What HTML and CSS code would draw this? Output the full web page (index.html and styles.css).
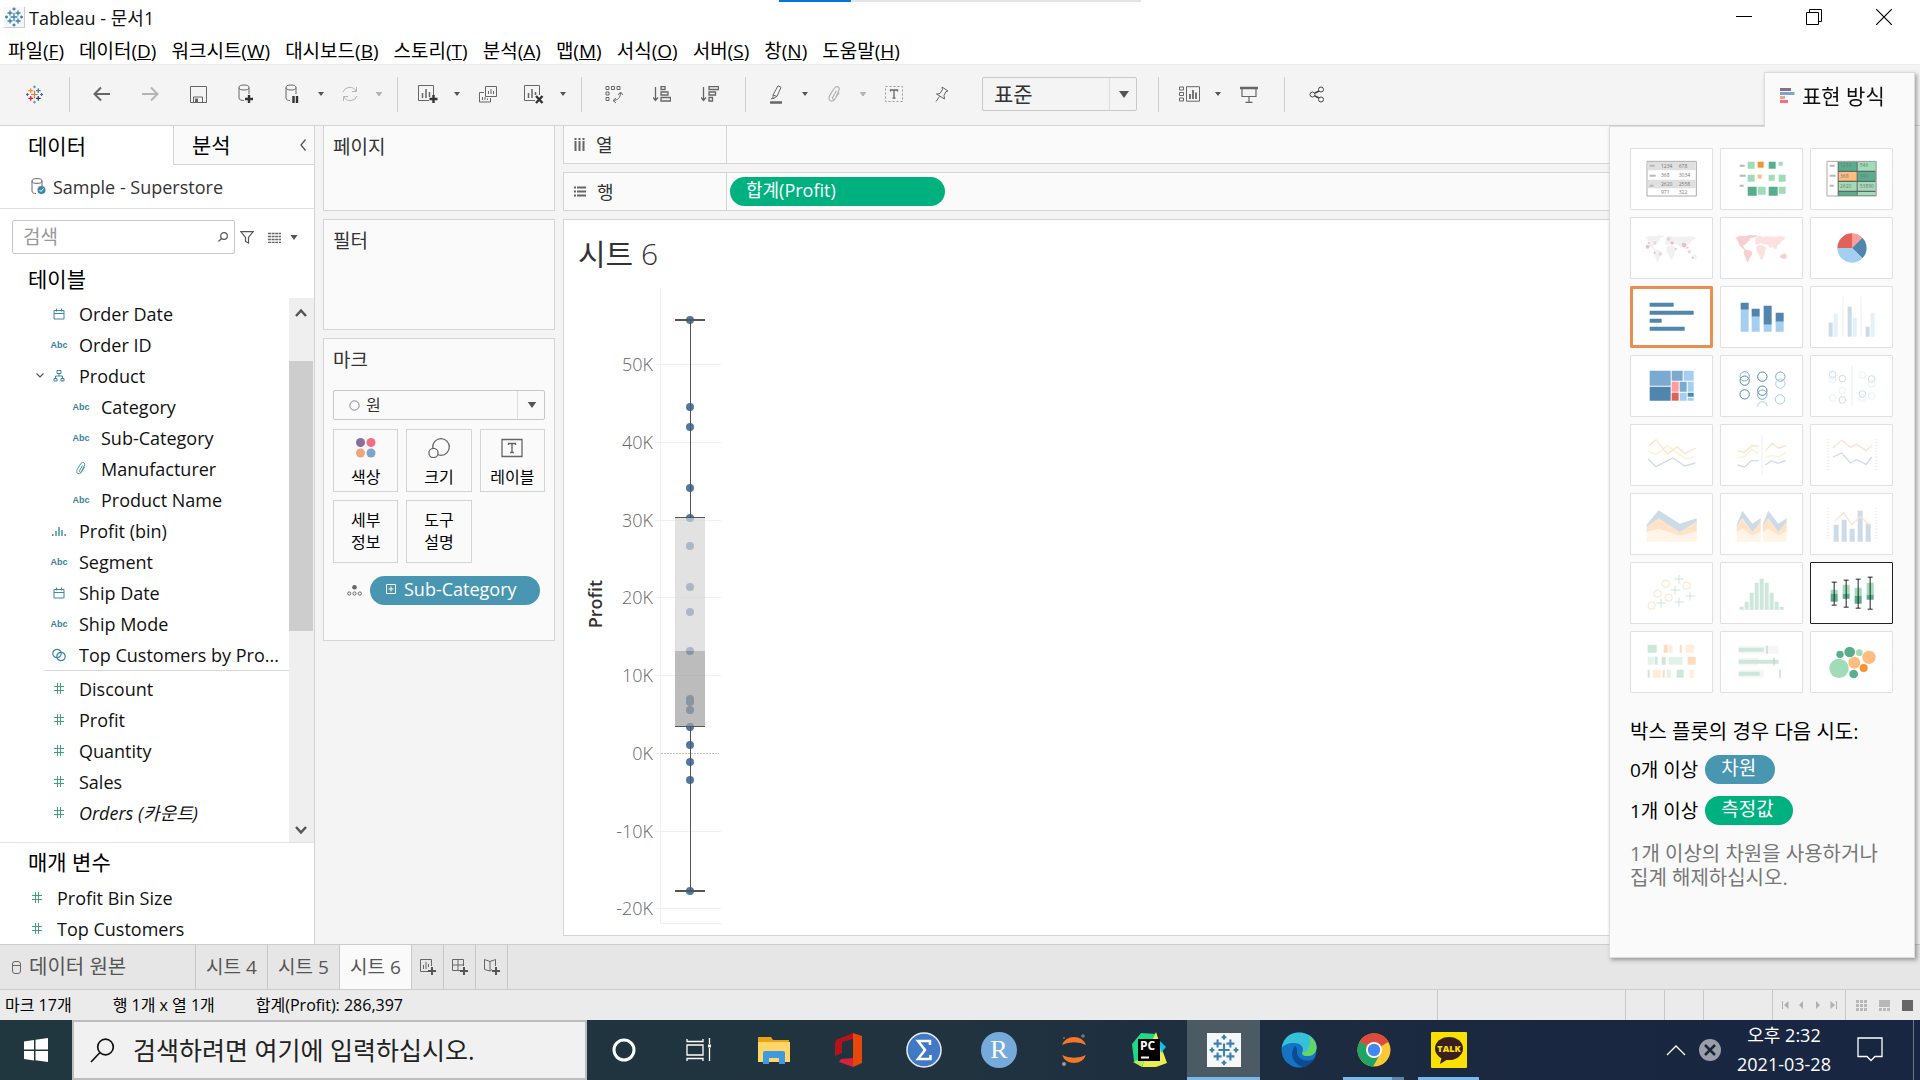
FILE: index.html
```html
<!DOCTYPE html>
<html lang="ko">
<head>
<meta charset="utf-8">
<title>Tableau - 문서1</title>
<link rel="stylesheet" href="styles.css">
</head>
<body>
<svg class="defs" aria-hidden="true">
  <symbol id="i-caret" viewBox="0 0 6 4"><path d="M0 0h6L3 4z" fill="currentColor"/></symbol>
  <symbol id="i-down" viewBox="0 0 10 7"><path d="M0 0h10L5 7z" fill="currentColor"/></symbol>
  <symbol id="i-cal" viewBox="0 0 12 12"><path d="M1 2.500h10v8.500H1zM1 5.500h10M3.500 .5v3M8.500 .5v3" fill="none" stroke="currentColor"/></symbol>
  <symbol id="i-tree" viewBox="0 0 12 12"><path d="M4 .5h4v3H4zM1 8.500h3v2.500H1zM8 8.500h3v2.500H8zM6 3.500v2.500M2.500 8.500V6h7v2.500" fill="none" stroke="currentColor"/></symbol>
  <symbol id="i-clip" viewBox="0 0 14 18"><path d="M3 8l4-6c1.500-2.500 6-1.500 5 2L8 13c-1 2-4 1-3-1l4-7M3 8c-2 3-3 7 0 8 3 1 4-1 5-3l4-6" fill="none" stroke="currentColor" stroke-width="1.300"/></symbol>
  <symbol id="i-bin" viewBox="0 0 14 12"><path d="M.75 9v2M4 6v5M7 2v9M10 5v6M13.200 9v2" fill="none" stroke="currentColor" stroke-width="1.400"/></symbol>
  <symbol id="i-set" viewBox="0 0 14 14"><circle cx="5" cy="5.500" r="4.200" fill="none" stroke="currentColor" stroke-width="1.200"/><circle cx="9" cy="8.500" r="4.200" fill="none" stroke="currentColor" stroke-width="1.200"/></symbol>
  <symbol id="i-hash" viewBox="0 0 10 11"><path d="M3.500 0v11M6.500 0v11M0 3.500h10M0 7.500h10" fill="none" stroke="currentColor"/></symbol>
  <symbol id="i-tableau" viewBox="0 0 18 20"><path d="M9 6v8M5.500 10h7" class="c1"/><path d="M5 3.500v5M2.500 6h5" class="c2"/><path d="M13 3.500v5M10.500 6h5" class="c3"/><path d="M5 11.500v5M2.500 14h5" class="c4"/><path d="M13 11.500v5M10.500 14h5" class="c5"/><path d="M9 .5v3M7.500 2h3M9 16.500v3M7.500 18h3" class="c6"/><path d="M1.500 8.500v3M0 10h3M16.500 8.500v3M15 10h3" class="c7"/></symbol>
</svg>

<header class="titlebar">
  <span class="app-logo"><svg width="18" height="20"><use href="#i-tableau"/></svg></span>
  <h1>Tableau - 문서1</h1>
  <div class="progress"><span></span></div>
  <div class="win-controls">
    <button aria-label="최소화"><svg width="16" height="16"><path d="M0 7.500h16" stroke="#000"/></svg></button>
    <button aria-label="이전 크기로"><svg width="16" height="16"><path d="M.5 3.500h12v12H.5zM3.500 3.500v-3h12v12h-3" fill="none" stroke="#000"/></svg></button>
    <button aria-label="닫기"><svg width="16" height="16"><path d="M0 0l16 16M16 0L0 16" stroke="#000" stroke-width="1.200"/></svg></button>
  </div>
</header>
<nav class="menubar">
  <a href="#">파일(<u>F</u>)</a><a href="#">데이터(<u>D</u>)</a><a href="#">워크시트(<u>W</u>)</a><a href="#">대시보드(<u>B</u>)</a><a href="#">스토리(<u>T</u>)</a><a href="#">분석(<u>A</u>)</a><a href="#">맵(<u>M</u>)</a><a href="#">서식(<u>O</u>)</a><a href="#">서버(<u>S</u>)</a><a href="#">창(<u>N</u>)</a><a href="#">도움말(<u>H</u>)</a>
</nav>

<div class="toolbar">
  <button class="tool logo" aria-label="시작 페이지"><svg width="17" height="19"><use href="#i-tableau"/></svg></button>
  <i class="sep"></i>
  <button class="tool" aria-label="실행 취소"><svg width="18" height="16"><path d="M17 8H2M8 1.500L1.500 8 8 14.500" stroke-width="2"/></svg></button>
  <button class="tool off" aria-label="다시 실행"><svg width="18" height="16"><path d="M1 8h15M10 1.500L16.500 8 10 14.500" stroke-width="2"/></svg></button>
  <button class="tool" aria-label="저장"><svg width="17" height="17"><path d="M.5 .5h16v16H.5zM3.500 16v-5h9v5"/><path d="M5 12.500h3v4H5z" class="fill"/></svg></button>
  <button class="tool" aria-label="새 데이터 원본"><svg width="16" height="20"><ellipse cx="6" cy="3.500" rx="5" ry="2.500"/><path d="M1 3.500V14c0 2 3 2.500 5 2.500M11 3.500V10"/><path d="M11 11v8M7 15h8" class="bold"/></svg></button>
  <button class="tool split" aria-label="자동 업데이트 일시 중지"><svg width="14" height="20"><ellipse cx="6" cy="3.500" rx="5" ry="2.500"/><path d="M1 3.500V14c0 2 2 2.500 4 2.500M11 3.500V10"/><path d="M8.500 12v7M12 12v7" class="bold"/></svg></button><button class="drop" aria-label="옵션"><svg width="6" height="4"><use href="#i-caret"/></svg></button>
  <button class="tool split off" aria-label="업데이트"><svg width="18" height="16"><path d="M2 6a7 6.500 0 0 1 13-1M16 10a7 6.500 0 0 1-13 1M15.500 1v4.500H11M2.500 15v-4.500H7"/></svg></button><button class="drop off" aria-label="옵션"><svg width="6" height="4"><use href="#i-caret"/></svg></button>
  <i class="sep"></i>
  <button class="tool split" aria-label="새 워크시트"><svg width="20" height="19"><path d="M11 15.500H.5V.5h15V10"/><path d="M4.500 8v5M8 4v9M11.500 7v5" stroke-width="1.500"/><path d="M15.500 10v8M11.500 14h8" class="bold"/></svg></button><button class="drop" aria-label="옵션"><svg width="6" height="4"><use href="#i-caret"/></svg></button>
  <button class="tool" aria-label="복제"><svg width="18" height="17"><path d="M6.500 .5h11v10h-11zM5 6.500H.5v9.500h11V12"/><path d="M9.500 5v3M12 3v5M14.500 5v3M3.500 11v3M6 11v3M8.500 12.500v1.500"/></svg></button>
  <button class="tool split" aria-label="시트 지우기"><svg width="20" height="19"><path d="M11 15.500H.5V.5h15V10"/><path d="M4.500 8v5M8 4v9M11.500 7v3" stroke-width="1.500"/><path d="M12 11l6.500 7M18.500 11L12 18" class="bold"/></svg></button><button class="drop" aria-label="옵션"><svg width="6" height="4"><use href="#i-caret"/></svg></button>
  <i class="sep"></i>
  <button class="tool" aria-label="행과 열 바꾸기"><svg width="18" height="18"><path d="M1 1.500h3v3H1zM6.500 1.500h3v3h-3zM12 1.500h3v3h-3zM1 7h3v3H1zM1 12.500h3v3H1zM15.500 8c0 5-3 7-7 7.500M13 10l2.500-3L18 10M11 13l-3 2.500 3 2.500"/></svg></button>
  <button class="tool" aria-label="오름차순 정렬"><svg width="18" height="16"><path d="M2.500 1v13M0 11.500l2.500 3 2.500-3M8 .5h4v3H8zM8 6h7v3H8zM8 11.500h9.500v3.500H8z" stroke-width="1.300"/></svg></button>
  <button class="tool" aria-label="내림차순 정렬"><svg width="18" height="16"><path d="M2.500 1v13M0 11.500l2.500 3 2.500-3M8 .5h9.500v3H8zM8 6h6.500v3H8zM8 11.500h3.500v3.500H8z" stroke-width="1.300"/></svg></button>
  <i class="sep"></i>
  <button class="tool split" aria-label="하이라이트"><svg width="14" height="19"><path d="M4 10L9 .8l3 1.500-4 9-4 2.500zM4 10l4 1.500M2 14l2-1"/><path d="M1 17.500h12" class="gray2"/></svg></button><button class="drop" aria-label="옵션"><svg width="6" height="4"><use href="#i-caret"/></svg></button>
  <button class="tool split off" aria-label="그룹"><svg width="13" height="17"><use href="#i-clip"/></svg></button><button class="drop off" aria-label="옵션"><svg width="6" height="4"><use href="#i-caret"/></svg></button>
  <button class="tool" aria-label="마크 레이블 표시"><svg width="18" height="16"><path d="M.5 .5h17v15H.5z" stroke-dasharray="2 2" stroke="#999"/><path d="M5.500 5.500V4h7v1.500M9 4v8M7.500 12.200h3" stroke-width="1.300"/></svg></button>
  <button class="tool" aria-label="축 고정"><svg width="14" height="16"><path d="M7 1l6 4-2 .5-2 4 .5 3.500-8-5L5 7.500l2.500-4zM4.500 10.500L1 15.500"/></svg></button>
  <span class="fit"><select aria-label="맞춤"><option>표준</option></select><svg width="10" height="7"><use href="#i-down"/></svg></span>
  <i class="sep"></i>
  <button class="tool split" aria-label="카드 표시/숨기기"><svg width="21" height="16"><path d="M.5 1h4v3h-4zM.5 6.500h4v3h-4zM.5 12h4v3h-4zM7.500 .7h13v14.500h-13z"/><path d="M11 8v5M14 4v9M17 6.500V13" stroke-width="1.800"/></svg></button><button class="drop" aria-label="옵션"><svg width="6" height="4"><use href="#i-caret"/></svg></button>
  <button class="tool" aria-label="프레젠테이션 모드"><svg width="18" height="17"><path d="M2 3v7.500h14V3M9 11v5M5.500 16.300h7" stroke-width="1.200"/><path d="M0 2h18" class="gray2"/></svg></button>
  <i class="sep"></i>
  <button class="tool share" aria-label="공유"><svg width="16" height="17"><circle cx="3.500" cy="8.500" r="2.500"/><circle cx="12" cy="3.500" r="2.500"/><circle cx="12" cy="13.500" r="2.500"/><path d="M6 7l4-2M6 10l4 2" stroke-width="1.800"/></svg></button>
</div>

<main class="workspace">
  <aside class="data-pane">
    <div class="pane-tabs">
      <button class="active">데이터</button>
      <button>분석 <svg width="6" height="12"><path d="M5.500 .5L1 6l4.500 5.500" fill="none" stroke="#555" stroke-width="1.300"/></svg></button>
    </div>
    <div class="source"><svg width="15" height="17"><ellipse cx="6" cy="3" rx="5" ry="2.400" fill="none" stroke="#666"/><path d="M1 3v10c0 2 2 2.500 4 2.500M11 3v5" fill="none" stroke="#666"/><circle cx="10.500" cy="12" r="4" fill="#3a87a6"/><path d="M8.500 12l1.500 1.500 2.500-3" fill="none" stroke="#fff"/></svg>Sample - Superstore</div>
    <div class="find">
      <span class="find-box"><input type="text" placeholder="검색" aria-label="검색"><svg width="10" height="10"><circle cx="6" cy="4" r="3.300" fill="none" stroke="#555" stroke-width="1.200"/><path d="M3.500 6.500L.5 9.500" stroke="#555" stroke-width="1.300"/></svg></span>
      <button aria-label="필터"><svg width="14" height="13"><path d="M.8 .6h12.400L8.500 6.500v5.500l-3-1.500v-4z" fill="none" stroke="#555" stroke-width="1.200"/></svg></button>
      <i></i>
      <button aria-label="보기"><svg width="13" height="11"><path d="M0 1.500h13M0 4.500h13M0 7.500h13M0 10.500h13" stroke="#666" stroke-width="1.500" stroke-dasharray="3 .6"/></svg><svg width="8" height="5"><use href="#i-down"/></svg></button>
    </div>
    <h2>테이블</h2>
    <div class="fields">
      <div class="field-list">
        <ul>
          <li><svg width="11" height="12"><use href="#i-cal"/></svg>Order Date</li>
          <li><b>Abc</b>Order ID</li>
          <li class="parent"><svg class="chev" width="8" height="5"><path d="M.5 .5L4 4 7.500 .5" fill="none" stroke="#555" stroke-width="1.200"/></svg><svg width="12" height="12"><use href="#i-tree"/></svg>Product</li>
          <li class="child"><b>Abc</b>Category</li>
          <li class="child"><b>Abc</b>Sub-Category</li>
          <li class="child"><svg width="10" height="13"><use href="#i-clip"/></svg>Manufacturer</li>
          <li class="child"><b>Abc</b>Product Name</li>
          <li><svg width="14" height="12"><use href="#i-bin"/></svg>Profit (bin)</li>
          <li><b>Abc</b>Segment</li>
          <li><svg width="11" height="12"><use href="#i-cal"/></svg>Ship Date</li>
          <li><b>Abc</b>Ship Mode</li>
          <li><svg width="14" height="14"><use href="#i-set"/></svg>Top Customers by Pro...</li>
        </ul>
        <ul class="measures">
          <li><svg width="10" height="11"><use href="#i-hash"/></svg>Discount</li>
          <li><svg width="10" height="11"><use href="#i-hash"/></svg>Profit</li>
          <li><svg width="10" height="11"><use href="#i-hash"/></svg>Quantity</li>
          <li><svg width="10" height="11"><use href="#i-hash"/></svg>Sales</li>
          <li><svg width="10" height="11"><use href="#i-hash"/></svg><em>Orders (카운트)</em></li>
        </ul>
      </div>
      <div class="scroll"><svg width="12" height="9"><path d="M1 8l5-5.500L11 8" fill="none" stroke="#555" stroke-width="2.500"/></svg><span></span><svg width="12" height="9"><path d="M1 1l5 5.500L11 1" fill="none" stroke="#555" stroke-width="2.500"/></svg></div>
    </div>
    <section class="params">
      <h2>매개 변수</h2>
      <ul class="measures">
        <li><svg width="10" height="11"><use href="#i-hash"/></svg>Profit Bin Size</li>
        <li><svg width="10" height="11"><use href="#i-hash"/></svg>Top Customers</li>
      </ul>
    </section>
  </aside>

  <div class="cards">
    <section class="card pages"><h3>페이지</h3></section>
    <section class="card filters"><h3>필터</h3></section>
    <section class="card marks">
      <h3>마크</h3>
      <span class="mark-type"><svg class="ring" width="11" height="11"><circle cx="5.500" cy="5.500" r="4.700" fill="none" stroke="#888"/></svg><select aria-label="마크 유형"><option>원</option></select><svg width="10" height="6"><use href="#i-down"/></svg></span>
      <div class="mark-grid">
        <button><svg width="20" height="20"><circle cx="4.500" cy="4.500" r="4.500" fill="#8a6f9a"/><circle cx="15" cy="4.500" r="4.500" fill="#f86e80"/><circle cx="4.500" cy="15" r="4.500" fill="#f2a57c"/><circle cx="15" cy="15" r="4.500" fill="#7ea3cc"/></svg>색상</button>
        <button><svg width="22" height="20"><circle cx="13" cy="9" r="8.300" fill="none" stroke="#666" stroke-width="1.300"/><circle cx="5.500" cy="15" r="4.600" fill="#fafafa" stroke="#666" stroke-width="1.300"/></svg>크기</button>
        <button><svg width="22" height="20"><path d="M1 1.500h20v17H1z" fill="none" stroke="#666" stroke-width="1.300"/><path d="M7.500 7V5.500h7V7M11 5.500v9M9 14.500h4" fill="none" stroke="#666" stroke-width="1.400"/></svg>레이블</button>
        <button class="plain">세부<br>정보</button>
        <button class="plain">도구<br>설명</button>
      </div>
      <div class="mark-row"><svg width="15" height="11"><circle cx="7.500" cy="2.300" r="2.300" fill="#666"/><circle cx="2.200" cy="8.500" r="1.600" fill="none" stroke="#666"/><circle cx="7.500" cy="8.500" r="1.600" fill="none" stroke="#666"/><circle cx="12.800" cy="8.500" r="1.600" fill="none" stroke="#666"/></svg><span class="pill dim"><svg width="10" height="10"><path d="M.5 .5h9v9h-9zM5 2.500v5M2.500 5h5" fill="none" stroke="#fff"/></svg>Sub-Category</span></div>
    </section>
  </div>

  <div class="view">
    <div class="shelf"><span class="shelf-name"><svg width="11" height="13"><path d="M1.500 3v10M5.500 3v10M9.500 3v10M1.500 0v2M5.500 0v2M9.500 0v2" stroke="#666" stroke-width="2"/></svg>열</span></div>
    <div class="shelf"><span class="shelf-name"><svg width="12" height="11"><path d="M3 1.500h9M3 5.500h9M3 9.500h9M0 1.500h2M0 5.500h2M0 9.500h2" stroke="#666" stroke-width="2"/></svg>행</span><span class="pill measure">합계(Profit)</span></div>
    <section class="sheet">
      <h2>시트 <span>6</span></h2>
      <svg class="chart" width="160" height="650" viewBox="564 278 160 650">
        <path class="gridlines" d="M655 364.500h66M655 442.500h66M655 520.500h66M655 597.500h66M655 675.500h66M655 831.500h66M655 908.500h66M660.500 288v635.500h61M655 753.500h5"/>
        <path d="M661 753.500h58" stroke="#c4c4c4" stroke-dasharray="2 1"/>
        <g fill="#4e79a7"><circle cx="690" cy="320" r="4"/><circle cx="690" cy="407" r="4"/><circle cx="690" cy="427" r="4"/><circle cx="690" cy="488" r="4"/><circle cx="690" cy="518" r="4"/><circle cx="690" cy="546" r="4"/><circle cx="690" cy="587" r="4"/><circle cx="690" cy="612" r="4"/><circle cx="690" cy="651" r="4"/><circle cx="690" cy="699" r="4"/><circle cx="690" cy="702" r="4"/><circle cx="690" cy="710" r="4"/><circle cx="690" cy="727" r="4"/><circle cx="690" cy="745" r="4"/><circle cx="690" cy="762" r="4"/><circle cx="690" cy="780" r="4"/><circle cx="690" cy="891" r="4"/></g>
        <path d="M675 517h30v134h-30z" fill="#d4d4d4" fill-opacity=".68"/>
        <path d="M675 651h30v75h-30z" fill="#a0a0a0" fill-opacity=".7"/>
        <path d="M690.500 320v197M690.500 726v165M675 517.500h30M675 726.500h30" stroke="#555"/>
        <path d="M675 320h30M675 891h30" stroke="#555" stroke-width="2"/>
        <g class="ticks" text-anchor="end"><text x="653" y="371">50K</text><text x="653" y="449">40K</text><text x="653" y="527">30K</text><text x="653" y="604">20K</text><text x="653" y="682">10K</text><text x="653" y="760">0K</text><text x="653" y="838">-10K</text><text x="653" y="915">-20K</text></g>
        <text class="axis-title" text-anchor="middle" transform="translate(602 604) rotate(-90)">Profit</text>
      </svg>
    </section>
  </div>
</main>

<aside class="show-me">
  <button class="show-tab"><svg width="15" height="16"><path d="M0 0h11v3H0z" fill="#866f95"/><path d="M0 4h14.500v3H0z" fill="#7ea3cc"/><path d="M0 8h5v3H0z" fill="#f2a57c"/><path d="M0 12h8v3H0z" fill="#f86e80"/></svg>표현 방식</button>
  <div class="show-body">
    <div class="charts">
      <button aria-label="텍스트 테이블"><svg viewBox="94 58 243 180"><path d="M142 95h148v104H142z" fill="#fff" stroke="#aaa" stroke-width="3"/><path d="M144 97h144v25H144zM144 150h144v26H144z" fill="#e0e0e0"/><path d="M150 105h15v6h-15zM150 135h18v6h-18zM150 165h12v6h-12z" fill="#b8b8b8"/><g class="mini"><text x="184" y="115">1234</text><text x="237" y="115">678</text><text x="184" y="142">368</text><text x="237" y="142">3034</text><text x="184" y="169">2620</text><text x="237" y="169">2558</text><text x="184" y="194">971</text><text x="237" y="194">322</text></g></svg></button>
      <button aria-label="히트맵"><svg viewBox="364 58 243 180"><path d="M420 105h15v6h-15zM420 135h18v6h-18zM420 165h12v6h-12z" fill="#b8b8b8"/><path d="M444 96h21v21h-21zM537 96h12v12h-12zM444 135h21v21h-21zM507 135h18v18h-18zM537 135h21v21h-21zM474 171h24v24h-24zM537 171h21v21h-21z" fill="#a1dcb8"/><path d="M507 96h21v21h-21zM444 171h27v27h-27zM507 171h27v27h-27z" fill="#58ae8c"/><path d="M474 96h18v18h-18z" fill="#f59331"/><path d="M474 135h12v12h-12z" fill="#ffbe7f"/></svg></button>
      <button aria-label="하이라이트 테이블"><svg viewBox="634 58 243 180"><path d="M682 95h148v104H682z" fill="#fff" stroke="#aaa" stroke-width="3"/><path d="M714 96h114v102H714z" fill="#666"/><path d="M717 97h54v26h-54zM774 127h54v26h-54zM717 187h54v10h-54z" fill="#58ae8c"/><path d="M774 97h54v26h-54zM717 157h54v26h-54zM774 157h54v26h-54zM774 187h54v10h-54z" fill="#a1dcb8"/><path d="M717 127h54v26h-54z" fill="#ffbe7f"/><path d="M690 105h15v6h-15zM690 135h18v6h-18zM690 165h12v6h-12z" fill="#b8b8b8"/><g class="mini"><text x="721" y="113">1234</text><text x="780" y="113">546</text><text x="721" y="144">368</text><text x="780" y="144">340</text><text x="721" y="175">2620</text><text x="780" y="175">53890</text></g></svg></button>

      <button aria-label="기호 맵"><svg viewBox="94 265 243 180"><path id="world" fill="#f1f1f1" d="M138 324l12-6 20 1 8-3 16 2-4 5-10 3 2 6-8 4-6 8-8 4 4 8 8 6-4 2-10-8-8-8-4-10-1-6zM164 362l10-2 12 6 2 8-8 10-4 12-4 2-4-14-6-12zM197 326l8-6 8-2 6 4 14-2 20 1 20-2 14 4-2 6-10 6-4 8-8 4-2 10-6 2-6-8-6 4-8-8-10-4-6 2-6-6-8 6-8 0zM200 350l12-4 14 4 4 6-4 8-2 12-6 12-6 2-4-14-8-12zM276 378l10-6 6 6-2 8-6 2-8-4z"/><g fill="#e8bfc6"><circle cx="144" cy="351" r="6"/><circle cx="147" cy="340" r="3"/><circle cx="166" cy="340" r="5" opacity=".6"/><circle cx="165" cy="369" r="3"/><circle cx="182" cy="373" r="5" opacity=".6"/><circle cx="207" cy="328" r="5" opacity=".7"/><circle cx="217" cy="340" r="5"/><circle cx="228" cy="358" r="3"/><circle cx="253" cy="346" r="7"/><circle cx="264" cy="354" r="3"/><circle cx="269" cy="366" r="5" opacity=".7"/><circle cx="279" cy="384" r="3"/></g></svg></button>
      <button aria-label="맵"><svg viewBox="364 265 243 180"><path fill="#fde0e0" d="M467 326l8-6 8-2 6 4 14-2 20 1 20-2 14 4-2 6-10 6-4 8-8 4-2 10-6 2-6-8-6 4-8-8-10-4-6 2-6-6-8 6-8 0zM470 350l12-4 14 4 4 6-4 8-2 12-6 12-6 2-4-14-8-12z"/><path d="M408 324l12-6 20 1 8-3 26 1-6 6-18 3 2 6-8 4-6 8-8 4 4 8 8 6-4 2-10-8-8-8-4-10zM434 362l10-2 12 6 2 8-8 10-4 12-4 2-4-14-6-12zM541 378l14-8 7 8-2 8-6 2-12-4z" fill="#f7d0d0"/></svg></button>
      <button aria-label="파이 차트"><svg viewBox="634 265 243 180"><path d="M757 355V311a44 44 0 0 0-44 44z" fill="#e26259"/><path d="M757 355V311a44 44 0 0 1 31 13z" fill="#ff9d9a"/><path d="M757 355l31-31a44 44 0 0 1 0 62z" fill="#5085ae"/><path d="M757 355l31 31a44 44 0 0 1-75-31z" fill="#a5cff0"/></svg></button>

      <button class="picked" aria-label="가로 막대"><svg viewBox="94 472 243 180"><path d="M150 519h72v12h-72zM150 543h132v12H150zM150 567h36v12h-36zM150 591h105v12H150z" fill="#5085ae"/></svg></button>
      <button aria-label="누적 막대"><svg viewBox="364 472 243 180"><path d="M423 519h24v21h-24zM456 537h24v24h-24zM492 528h24v57h-24zM528 549h24v27h-24z" fill="#5085ae"/><path d="M423 540h24v66h-24zM456 561h24v45h-24zM492 585h24v21h-24zM528 576h24v30h-24z" fill="#a5cff0"/></svg></button>
      <button aria-label="병렬 막대"><svg viewBox="634 472 243 180"><path d="M687 579h12v42h-12zM744 531h12v90h-12zM798 591h12v30h-12z" fill="#cddbe8"/><path d="M702 552h12v69h-12zM759 564h12v57h-12zM813 549h12v72h-12z" fill="#e4f1fb"/><path d="M730 501v120M784 501v120" stroke="#eee" stroke-width="3"/></svg></button>

      <button aria-label="트리맵"><svg viewBox="94 679 243 180"><path d="M150 723h63v45h-63zM216 723h33v30h-33zM240 756h21v30h-21z" fill="#7aaacf"/><path d="M150 771h63v42h-63zM264 789h18v12h-18z" fill="#5085ae"/><path d="M252 723h30v30h-30zM264 756h18v30h-18zM240 789h21v24h-21zM264 804h18v9h-18z" fill="#a5cff0"/><path d="M216 756h21v30h-21z" fill="#ff9d9a"/><path d="M216 789h21v24h-21z" fill="#e26259"/></svg></button>
      <button aria-label="원 뷰"><svg viewBox="364 679 243 180" fill="none" stroke-width="3"><g stroke="#5085ae"><circle cx="435" cy="753" r="14"/><circle cx="435" cy="794" r="14"/><circle cx="488" cy="741" r="14"/><circle cx="488" cy="783" r="14"/></g><g stroke="#7aaacf"><circle cx="435" cy="740" r="14"/><circle cx="542" cy="741" r="14"/><circle cx="488" cy="795" r="14"/></g><g stroke="#a5cff0"><circle cx="542" cy="762" r="14"/><circle cx="541" cy="809" r="14"/><path d="M474 830a14 14 0 0 1 28 0"/></g></svg></button>
      <button aria-label="병렬 원"><svg viewBox="634 679 243 180" fill="none" stroke-width="3"><path d="M757 708v120" stroke="#eee"/><g stroke="#cddbe8"><circle cx="699" cy="735" r="10"/><circle cx="728" cy="747" r="10"/><circle cx="728" cy="811" r="10"/><circle cx="816" cy="748" r="10"/><circle cx="788" cy="793" r="10"/></g><g stroke="#e4f1fb"><circle cx="699" cy="750" r="10"/><circle cx="728" cy="783" r="10"/><circle cx="699" cy="805" r="10"/><circle cx="788" cy="736" r="10"/><circle cx="816" cy="762" r="10"/><circle cx="788" cy="805" r="10"/><circle cx="816" cy="799" r="10"/></g></svg></button>

      <button aria-label="라인(연속형)"><svg viewBox="94 46 243 180" fill="none" stroke-width="4"><path d="M146 125l24 9 34-26 53 39 30-6" stroke="#fff0d2"/><path d="M148 108l21-18 34 44 30-23 22 21 33-17" stroke="#fee3c8"/><path d="M145 148l24 23 50-26 37 24 31-9" stroke="#cddbe8"/></svg></button>
      <button aria-label="라인(불연속형)"><svg viewBox="364 46 243 180" fill="none" stroke-width="4"><path d="M487 75v120" stroke="#eee" stroke-width="3"/><path d="M414 144l21-3 21-22 20 13M496 144l20-7 20 5 22-13" stroke="#fff0d2"/><path d="M414 124l22 4 20-20 21 1M498 123l19-22 19 14 22-6" stroke="#fee3c8"/><path d="M414 166l21 6 20-19h22M497 166l19-13 18 8 24-8" stroke="#cddbe8"/></svg></button>
      <button aria-label="이중 라인"><svg viewBox="634 46 243 180" fill="none" stroke-width="4"><path d="M685.500 87v95M829.500 87v95" stroke="#eee" stroke-width="9" stroke-dasharray="3 6"/><path d="M700 114l26-22 27 21 17-9 29 18 18-14" stroke="#fee3c8"/><path d="M700 142l26-12 27 30 17-10 29 14 17-22" stroke="#cddbe8"/></svg></button>

      <button aria-label="영역(연속형)"><svg viewBox="94 253 243 180"><path d="M141 345l36-43 63 40 51-16v14l-51 28-63-41-36 24z" fill="#cddbe8"/><path d="M141 350l36-24 63 41 51-32v31l-51 12-63-20-36 10z" fill="#fee3c8"/><path d="M141 368l36-10 63 20 51-13v31H141z" fill="#fff4e6"/></svg></button>
      <button aria-label="영역(불연속형)"><svg viewBox="364 253 243 180"><g id="twoarea"><path d="M411 345l17-42 30 39 25-16v14l-25 28-30-42-17 24z" fill="#cddbe8"/><path d="M411 350l17-24 30 41 25-32v31l-25 12-30-20-17 10z" fill="#fee3c8"/><path d="M411 368l17-10 30 20 25-13v31h-72z" fill="#fff4e6"/></g><use href="#twoarea" x="78"/></svg></button>
      <button aria-label="이중 조합"><svg viewBox="634 253 243 180"><path d="M685.500 294v95M829.500 294v95" stroke="#eee" stroke-width="9" stroke-dasharray="3 6"/><path d="M702 345h15v51h-15zM726 330h15v66h-15zM750 357h15v39h-15zM774 303h15v93h-15zM798 342h15v54h-15z" fill="#cddbe8"/><path d="M706 333l26-24 25 36 25-25 28 26" fill="none" stroke="#fee3c8" stroke-width="4"/></svg></button>

      <button aria-label="산점도"><svg viewBox="94 460 243 180" fill="none" stroke-width="3"><g stroke="#fee3c8"><circle cx="198" cy="522" r="11"/><circle cx="261" cy="528" r="11"/><circle cx="174" cy="552" r="11"/><circle cx="207" cy="564" r="11"/><circle cx="156" cy="588" r="11"/></g><path d="M238 495v27M225 508h27M226 528v27M213 541h27M271 546v27M258 559h27M184 567v27M171 580h27M238 564v27M225 577h27" stroke="#cde7db"/></svg></button>
      <button aria-label="히스토그램"><svg viewBox="364 460 243 180"><path d="M420 591h12v9h-12zM435 576h12v24h-12zM450 549h12v51h-12zM465 519h12v81h-12zM480 507h12v93h-12zM495 519h12v81h-12zM510 549h12v51h-12zM525 576h12v24h-12zM540 591h12v9h-12z" fill="#cde7db"/></svg></button>
      <button class="current" aria-label="박스 플롯"><svg viewBox="634 460 243 180"><path d="M693 540h21v12h-21zM729 525h21v27h-21zM765 534h21v24h-21zM801 519h21v36h-21z" fill="#a1dcb8"/><path d="M693 552h21v24h-21zM729 552h21v15h-21zM765 558h21v24h-21zM801 555h21v15h-21z" fill="#58ae8c"/><path d="M703.500 517v69M696 517.500h15M696 586.500h15M739.500 511v81M732 511.500h15M732 592.500h15M775.500 508v87M768 508.500h15M768 595.500h15M811.500 502v96M804 502.500h15M804 598.500h15" stroke="#222" stroke-width="3"/></svg></button>

      <button aria-label="간트"><svg viewBox="94 667 243 180"><path d="M144 705h27v24h-27zM165 741h9v24h-9zM186 741h12v24h-12zM144 780h6v24h-6zM231 780h21v24h-21z" fill="#cde7db"/><path d="M144 741h18v24h-18zM207 741h42v24h-42zM201 780h12v24h-12z" fill="#e2f3e9"/><path d="M192 705h12v24h-12zM240 705h6v24h-6zM264 741h24v24h-24zM189 780h6v24h-6z" fill="#fbdcc0"/><path d="M207 705h12v24h-12zM258 705h24v24h-24zM159 780h24v24h-24zM270 780h12v24h-12z" fill="#ffecd9"/></svg></button>
      <button aria-label="불릿 그래프"><svg viewBox="364 667 243 180"><path d="M417 708h120v24H417zM417 744h60v24h-60zM417 780h75v24h-75z" fill="#f6f6f6"/><path d="M417 714h75v12h-75zM417 750h120v12H417zM417 786h63v12h-63z" fill="#cde7db"/><path d="M502 708v24M523 744v24M541 780v24" stroke="#c2c2c2" stroke-width="3"/></svg></button>
      <button aria-label="거품형 차트"><svg viewBox="634 667 243 180"><g fill="#58ae8c"><circle cx="721" cy="734" r="11"/><circle cx="750" cy="727" r="16"/><circle cx="762" cy="793" r="13"/></g><g fill="#a1dcb8"><circle cx="718" cy="776" r="29"/><circle cx="779" cy="729" r="10"/></g><g fill="#ffbe7f"><circle cx="764" cy="759" r="18"/><circle cx="808" cy="743" r="20"/></g><circle cx="792" cy="775" r="12" fill="#f59331"/></svg></button>
    </div>
    <p class="lead">박스 플롯의 경우 다음 시도:</p>
    <p class="need">0개 이상 <span class="pill dim">차원</span></p>
    <p class="need">1개 이상 <span class="pill measure">측정값</span></p>
    <p class="hint">1개 이상의 차원을 사용하거나 집계 해제하십시오.</p>
  </div>
</aside>

<nav class="sheet-tabs">
  <button class="ds"><svg width="9" height="13"><rect x=".5" y=".5" width="8" height="12" rx="2.500" fill="none" stroke="#666"/><path d="M.5 4.500h8" stroke="#666"/></svg>데이터 원본</button>
  <button>시트 4</button>
  <button>시트 5</button>
  <button class="active">시트 6</button>
  <button class="new" aria-label="새 워크시트"><svg width="16" height="16"><path d="M8 12.500H.5V.5h11V7M3.500 6v4M6 3v7M8.500 5v3" fill="none" stroke="#666"/><path d="M12 8v8M8 12h8" stroke="#555" stroke-width="2"/></svg></button>
  <button class="new" aria-label="새 대시보드"><svg width="16" height="16"><path d="M8 11.500H.5V.5h11V7M6 .5v11M.5 6h11" fill="none" stroke="#666"/><path d="M12 8v8M8 12h8" stroke="#555" stroke-width="2"/></svg></button>
  <button class="new" aria-label="새 스토리"><svg width="16" height="16"><path d="M8 10.500L6 12 .5 10.500V.5L6 2.500l5.500-2V7M6 2.500V12" fill="none" stroke="#666"/><path d="M12 8v8M8 12h8" stroke="#555" stroke-width="2"/></svg></button>
</nav>
<footer class="status">
  <span>마크 17개</span><span>행 1개 x 열 1개</span><span>합계(Profit): 286,397</span>
  <div class="cells"><i class="w1"></i><i class="w2"></i><i class="w2"></i><i class="w3"></i>
    <i class="nav"><svg width="7" height="8"><path d="M.5 0v8" stroke="#b0b0b0"/><path d="M6.500 0v8L2 4z" fill="#b0b0b0"/></svg><svg width="7" height="8"><path d="M5 0v8L1 4z" fill="#b0b0b0"/></svg><svg width="7" height="8"><path d="M2 0v8l4-4z" fill="#b0b0b0"/></svg><svg width="7" height="8"><path d="M6.500 0v8" stroke="#b0b0b0"/><path d="M.5 0v8L5 4z" fill="#b0b0b0"/></svg></i>
    <i class="modes"><svg width="11" height="11"><path d="M0 1.500h11M0 5.500h11M0 9.500h11" stroke="#b8b8b8" stroke-width="3" stroke-dasharray="3 1"/></svg><svg width="11" height="11"><path d="M0 0h11v7H0z" fill="#b8b8b8"/><path d="M0 9.500h11" stroke="#b8b8b8" stroke-width="3" stroke-dasharray="3 1"/></svg><svg width="11" height="11"><path d="M0 0h11v11H0z" fill="#666"/></svg></i>
  </div>
</footer>

<div class="taskbar">
  <button class="start" aria-label="시작"><svg width="24" height="24"><path d="M0 3.500L10 2v9.500H0zM11.500 1.800L24 0v11.500H11.500zM0 13h10v9.500L0 21zM11.500 13H24v11l-12.500-1.800z" fill="#fff"/></svg></button>
  <label class="search"><svg width="25" height="25"><circle cx="15.500" cy="9" r="7.800" fill="none" stroke="#111" stroke-width="1.700"/><path d="M10 14.500L1 24" stroke="#111" stroke-width="1.700"/></svg><input type="text" aria-label="Windows 검색" placeholder="검색하려면 여기에 입력하십시오."></label>
  <div class="apps">
    <button aria-label="Cortana"><svg width="26" height="26"><circle cx="13" cy="13" r="10" fill="none" stroke="#fff" stroke-width="3"/></svg></button>
    <button aria-label="작업 보기"><svg width="26" height="26" fill="none" stroke="#fff" stroke-width="1.300"><path d="M1 2v2.500h16V2M1 8h16v10H1zM1 24v-2.500h16V24M23.500 1v6M23.500 11v13"/><path d="M23.500 7.500v3" stroke-width="3"/></svg></button>
    <button aria-label="파일 탐색기"><svg width="32" height="28"><path d="M0 1h13l2 3h16v21H0z" fill="#e8a317"/><path d="M0 6h32v20H0z" fill="#ffd667"/><path d="M5 28V17q0-2 2-2h18q2 0 2 2v11h-6v-6H11v6z" fill="#3d9ae0"/></svg></button>
    <button aria-label="Office"><svg width="28" height="34"><path d="M18 0l9 3v27l-9 4z" fill="#e8470c"/><path d="M18 0L2 6.500C0 8 0 9 0 11v12l7-3V9l11-3z" fill="#b5121b"/><path d="M6 26l12-1v9L4 29z" fill="#d8213b"/></svg></button>
    <button aria-label="통계"><svg width="36" height="36"><circle cx="18" cy="18" r="17" fill="#4279c4" stroke="#e6eef8" stroke-width="1.500"/><path d="M24 13v-4H12l7 9-7 9h12.500v-4" fill="none" stroke="#fff" stroke-width="2.500"/></svg></button>
    <button aria-label="RStudio"><svg width="36" height="36"><circle cx="18" cy="18" r="18" fill="#75aadb"/><text x="18" y="26" text-anchor="middle" class="glyph-r">R</text></svg></button>
    <button aria-label="Jupyter"><svg width="26" height="34"><path d="M1 12a13 13 0 0 1 24 0 17 9 0 0 0-24 0zM1 22a13 13 0 0 0 24 0 17 9 0 0 1-24 0z" fill="#f37726"/><circle cx="22" cy="3" r="1.800" fill="#777"/><circle cx="3" cy="31" r="2" fill="#999"/><circle cx="3" cy="5" r="1" fill="#777"/></svg></button>
    <button aria-label="PyCharm"><svg width="36" height="36"><path d="M1 12L10 1l16 1-5 12-4 21-14-6z" fill="#21d789"/><path d="M25 0l3 9 8 22-11 4-14 0 4-12z" fill="#e8ee4d"/><path d="M28 8l7 7-5 6z" fill="#07c3f2"/><path d="M2 30l9 5 3-10z" fill="#b8ea52"/><path d="M7 7h22v22H7z" fill="#000"/><text x="9" y="18" class="glyph-pc">PC</text><path d="M10 25.500h8" stroke="#fff" stroke-width="2"/></svg></button>
    <button class="running current" aria-label="Tableau"><span><svg width="30" height="32"><use href="#i-tableau"/></svg></span></button>
    <button aria-label="Edge"><svg width="36" height="36"><circle cx="18" cy="18" r="17.500" fill="#1673c4"/><path d="M.8 16C2 6 9 .5 18 .5 28 .5 35.500 7 35.500 15c0 6-4 9-9 9-4 0-6-1.500-5-4 2-5-2-9-8-9-6 0-11 2-12.700 5z" fill="#35c1d8"/><path d="M28 4c5 3 7.500 7 7.500 11 0 6-4 9-9 9-4 0-6-1.500-5-4 4 1 10-6 6.500-16z" fill="#63d663"/><path d="M14 14c-6 8-2 18 8 21 5-1 9-4 11-8-8 4-18 0-17-8 0-2 0-4-2-5z" fill="#0c4a94"/></svg></button>
    <button class="running multi" aria-label="Chrome"><svg width="34" height="34"><circle cx="17" cy="17" r="16.500" fill="#fcc934"/><path d="M17 17L2.500 9A16.500 16.500 0 0 1 31.500 9z" fill="#dd4b3e"/><path d="M17 17L2.700 8.800A16.500 16.500 0 0 0 16 33.500l7-12z" fill="#1fa463"/><circle cx="17" cy="17" r="8" fill="#fff"/><circle cx="17" cy="17" r="6.200" fill="#4587f0"/></svg></button>
    <button class="running" aria-label="카카오톡"><svg width="36" height="36"><rect width="36" height="36" rx="1" fill="#fae100"/><ellipse cx="18" cy="16.500" rx="14" ry="11.500" fill="#3b1e1e"/><path d="M11 24l-2 8 8-5z" fill="#3b1e1e"/><text x="18" y="20" text-anchor="middle" class="glyph-talk">TALK</text></svg></button>
  </div>
  <div class="tray">
    <svg width="20" height="11"><path d="M1 10l9-9 9 9" fill="none" stroke="#fff" stroke-width="1.300"/></svg>
    <svg width="24" height="24"><circle cx="12" cy="12" r="11" fill="#9a9ea8"/><path d="M7 7l10 10M17 7L7 17" stroke="#1c2638" stroke-width="2.500"/></svg>
    <time><span>오후 2:32</span><span>2021-03-28</span></time>
    <svg width="26" height="26"><path d="M1 1h24v18.500h-7l-4 4-4-4H1z" fill="none" stroke="#fff" stroke-width="1.300"/></svg>
    <i></i>
  </div>
</div>
</body>
</html>
```
FILE: styles.css
```css
* { box-sizing: border-box; }
body {
  margin: 0;
  min-height: 100vh;
  display: flex;
  flex-direction: column;
  position: relative;
  background: #f4f4f4;
  color: #111;
  font: 18px/24px "Open Sans", "Noto Sans CJK KR", sans-serif;
  overflow: hidden;
}
button, input, select { font: inherit; color: inherit; }
button { border: 0; padding: 0; background: none; }
h1, h2, h3, p, ul { margin: 0; padding: 0; font-weight: 400; }
ul { list-style: none; }
svg { flex: none; display: block; }
.defs { position: absolute; width: 0; height: 0; }

/* Tableau mark: blue by default, coloured in the toolbar */
.c1, .c2, .c3, .c4, .c5, .c6, .c7 { fill: none; stroke: #3b82b0; stroke-width: 1.3; }
.c1 { stroke: var(--orange, #3b82b0); }
.c2 { stroke: var(--amber, #3b82b0); }
.c4 { stroke: var(--red, #3b82b0); }
.c5 { stroke: var(--navy, #3b82b0); }
.c6 { stroke: var(--pale, #3b82b0); }
.c7 { stroke: var(--violet, #3b82b0); }
.logo { --orange: #e8762c; --amber: #eb912b; --red: #c72035; --navy: #1f457e; --pale: #7199a6; --violet: #5b6591; }

/* Title bar and menus */
.titlebar { display: flex; align-items: center; height: 34px; padding: 0 28px 0 4px; background: #fff; position: relative; }
.titlebar h1 { font-size: 18px; line-height: 24px; margin-left: 4px; padding-top: 2px; }
.app-logo { display: flex; padding: 0 1px; background: #f7f7f7; border: 1px solid #ccc; border-width: 0 1px 1px 0; }
.progress { position: absolute; top: 0; left: 779px; width: 362px; height: 2px; background: #e4e4e4; }
.progress span { display: block; width: 72px; height: 2px; background: #0078d7; }
.win-controls { margin-left: auto; display: flex; gap: 54px; }
.menubar { display: flex; gap: 15px; height: 30px; padding: 4px 8px 0; background: #fff; }
.menubar a { color: #000; text-decoration: none; font-size: 19px; line-height: 26px; }

/* Toolbar */
.toolbar { display: flex; align-items: center; height: 62px; padding: 0 10px 2px; border-top: 1px solid #ececec; border-bottom: 1px solid #d4d4d4; color: #555; }
.tool { width: 48px; height: 36px; display: flex; align-items: center; justify-content: center; }
.tool svg { fill: none; stroke: #666; }
.share svg { stroke: #444; }
.tool .fill { fill: #666; stroke: none; }
.tool .bold { stroke: #333; stroke-width: 2.4; }
.tool .gray2 { stroke-width: 2.5; }
.split { width: 44px; }
.drop { width: 14px; height: 36px; display: flex; align-items: center; justify-content: center; }
.off { color: #b4b4b4; }
.off svg { stroke: #b4b4b4; }
.sep { width: 1px; height: 35px; margin: 0 8px 0 11px; background: #d0d0d0; }
.fit { display: flex; align-items: center; position: relative; width: 155px; height: 34px; margin: 0 10px 0 16px; }
.fit select, .mark-type select { appearance: none; width: 100%; height: 100%; border: 1px solid #c8c8c8; border-radius: 2px; background: linear-gradient(#ddd, #ddd) right 26px top / 1px 100% no-repeat; padding: 0 11px; color: #333; font-size: 21px; }
.fit svg { position: absolute; right: 8px; color: #555; }

/* Layout */
.workspace { flex: 1; display: flex; gap: 8px; min-height: 0; }
.data-pane { width: 315px; display: flex; flex-direction: column; background: #fff; border-right: 1px solid #d4d4d4; }
.pane-tabs { display: flex; font-size: 21px; color: #000; }
.pane-tabs button { flex: 1; height: 39px; display: flex; align-items: center; justify-content: space-between; padding: 0 8px 0 18px; background: #fafafa; border: solid #d4d4d4; border-width: 0 0 1px 1px; }
.pane-tabs .active { flex: 0 0 173px; padding-left: 28px; background: #fff; border: 0; }
.source { display: flex; align-items: center; gap: 7px; height: 44px; padding-left: 31px; color: #333; border-bottom: 1px solid #e2e2e2; }
.find { display: flex; align-items: center; padding: 11px 16px 11px 12px; color: #555; }
.find-box { position: relative; display: flex; align-items: center; }
.find-box input { width: 223px; height: 34px; border: 1px solid #c8c8c8; border-radius: 2px; padding: 0 30px 0 10px; font-size: 19px; }
.find-box input::placeholder { color: #999; opacity: 1; }
.find-box svg { position: absolute; right: 7px; }
.find button { display: flex; align-items: center; gap: 9px; margin-left: 5px; }
.find i { width: 1px; height: 26px; background: #ccc; margin: 0 3px 0 6px; }
.data-pane h2 { font-size: 21px; line-height: 24px; padding: 2px 0 0 28px; color: #000; }
.fields { flex: 1; display: flex; min-height: 0; margin-top: 7px; border-bottom: 1px solid #e2e2e2; }
.field-list { flex: 1; overflow: hidden; }
.data-pane li { display: flex; align-items: center; height: 31px; padding-left: 51px; color: #111; white-space: nowrap; }
.data-pane li > :first-child, .parent > .chev + svg { width: 16px; margin-right: 12px; }
.data-pane li > svg { color: #3a87a6; }
.data-pane .measures svg { color: #42a27c; }
.data-pane li b { font: 700 9px/12px "Liberation Sans", sans-serif; color: #3a7f9c; display: flex; justify-content: center; }
.data-pane .child { padding-left: 73px; }
.data-pane .parent { padding-left: 36px; }
.data-pane .parent > .chev { width: 8px; margin-right: 7px; }
.field-list .measures { border-top: 1px solid #d8d8d8; margin-left: 44px; padding-top: 2px; }
.field-list .measures li { padding-left: 7px; }
.scroll { width: 25px; background: #efefef; display: flex; flex-direction: column; align-items: center; justify-content: space-between; padding: 10px 1px 7px 0; }
.scroll span { width: 100%; height: 270px; background: #cdcdcd; margin: 44px 0 auto; }
.data-pane .params h2 { padding-top: 7px; margin-bottom: 8px; }
.data-pane .params li { padding-left: 29px; }

.cards { width: 232px; display: flex; flex-direction: column; gap: 8px; }
.card { background: #fafafa; border: 1px solid #d4d4d4; padding: 9px; }
.card h3 { font-size: 19px; line-height: 24px; color: #333; }
.pages { height: 85px; border-top: 0; }
.filters { height: 111px; }
.marks { height: 303px; }
.mark-type { position: relative; display: flex; align-items: center; height: 30px; margin: 18px 0 9px; }
.mark-type select { padding: 0 32px; font-size: 16px; }
.mark-type svg { position: absolute; right: 8px; color: #555; }
.mark-type .ring { left: 16px; }
.mark-grid { display: grid; grid-template-columns: repeat(3, 1fr); gap: 8px; color: #000; font-size: 16px; line-height: 23px; }
.mark-grid button { height: 63px; border: 1px solid #d4d4d4; display: flex; flex-direction: column; align-items: center; justify-content: space-between; padding: 8px 0 0; line-height: 28px; }
.mark-grid .plain { display: block; padding: 0 0 2px; line-height: 22px; }
.mark-row { display: flex; align-items: center; gap: 8px; margin: 13px 5px 0 14px; }
.pill { display: flex; align-items: center; height: 29px; border-radius: 15px; color: #fff; padding: 0 16px 3px; line-height: 24px; }
.dim { background: #4996b2; }
.measure { background: #00b180; }
.mark-row .pill { flex: 1; gap: 8px; }

.view { flex: 1; min-width: 0; display: flex; flex-direction: column; gap: 8px; padding: 0 9px 8px 0; }
.shelf { height: 39px; display: flex; align-items: center; background: #fafafa; border: 1px solid #d4d4d4; }
.shelf:first-child { height: 38px; border-top: 0; }
.shelf-name { width: 163px; align-self: stretch; display: flex; align-items: center; gap: 11px; padding-left: 10px; color: #333; border-right: 1px solid #d4d4d4; }
.shelf .pill { width: 215px; margin-left: 3px; }
.sheet { flex: 1; background: #fff; border: 1px solid #d4d4d4; }
.sheet h2 { font-size: 30px; line-height: 38px; padding: 15px 14px 5px; color: #333; }
.sheet h2 span, .ticks { font-weight: 300; }
.gridlines { fill: none; stroke: #efefef; }
.ticks { fill: #666; font-size: 18px; }
.axis-title { font-size: 18px; font-weight: 600; fill: #333; }

/* Show Me */
.show-me { position: absolute; top: 72px; right: 5px; width: 306px; display: flex; flex-direction: column; filter: drop-shadow(2px 2px 2px rgba(0, 0, 0, .35)); }
.show-tab { align-self: flex-end; width: 151px; height: 55px; margin-bottom: -1px; z-index: 1; display: flex; align-items: center; gap: 7px; padding: 0 15px 8px; background: #fafafa; border: 1px solid #ddd; border-bottom: 0; font-size: 21px; white-space: nowrap; }
.show-body { background: #fafafa; border: 1px solid #ddd; padding: 21px 21px 67px 20px; font-size: 20px; color: #000; }
.charts { display: grid; grid-template-columns: repeat(3, 1fr); gap: 7px; margin-bottom: 26px; }
.charts button { height: 62px; border: 1px solid #e0e0e0; border-radius: 1px; background: #fff; overflow: hidden; }
.charts svg { width: 81px; height: 60px; }
.charts .picked { border-color: #ea8f50; outline: 2px solid #ea8f50; outline-offset: -3px; }
.charts .current { border-color: #222; }
.mini { font: 15px "Open Sans", sans-serif; fill: #777; }
.lead { padding-top: 1px; margin-bottom: -1px; }
.need { display: flex; align-items: center; gap: 7px; height: 29px; margin-top: 12px; font-size: 19px; }
.need .pill { padding-right: 19px; }
.hint { margin-top: 17px; color: #777; word-break: keep-all; }

/* Sheet tabs and status bar */
.sheet-tabs { display: flex; height: 46px; background: #e6e6e6; border: solid #ccc; border-width: 1px 0; color: #555; font-size: 19px; }
.sheet-tabs button { width: 72px; display: flex; align-items: center; justify-content: center; border-right: 1px solid #c8c8c8; }
.sheet-tabs .ds { width: 196px; justify-content: flex-start; gap: 8px; padding-left: 12px; font-size: 20px; }
.sheet-tabs .active { background: #fafafa; }
.sheet-tabs .new { width: 32px; }
.status { display: flex; align-items: center; gap: 41px; height: 30px; padding-left: 5px; background: #ebebeb; color: #000; font-size: 16px; }
.cells { margin-left: auto; display: flex; align-self: stretch; }
.cells i { border-left: 1px solid #c8c8c8; display: flex; align-items: center; }
.w1 { width: 188px; }
.w2 { width: 39px; }
.w3 { width: 69px; }
.nav { width: 73px; gap: 9px; padding-left: 9px; }
.modes { width: 75px; gap: 12px; padding-left: 10px; }

/* Windows taskbar */
.taskbar { display: flex; height: 60px; background: linear-gradient(90deg, #21373f, #20333f 50%, #1a2740 80%, #192642); color: #fff; }
.start { width: 72px; display: flex; align-items: center; justify-content: center; }
.search { width: 515px; display: flex; align-items: center; gap: 18px; padding-left: 16px; background: #f1f1f1; border: 2px solid #bdbdbd; }
.search input { flex: 1; min-width: 0; border: 0; background: none; padding: 0; font-size: 25px; }
.search input::placeholder { color: #222; opacity: 1; }
.apps { display: flex; gap: 2px; }
.apps button { width: 73px; display: flex; align-items: center; justify-content: center; border: solid transparent; border-width: 3px 0; }
.apps .running { border-bottom-color: #76b9ed; }
.apps .running:not(.current) { width: 61px; margin: 0 6px; }
.apps .multi { border-image: linear-gradient(90deg, #76b9ed 78%, #5b87ad 78%) 3; border-top-width: 0; padding-top: 3px; }
.apps .current { background: #4c5a64; }
.apps .current span { padding: 1px 2px; background: #f5f7f8; }
.glyph-r { font: 26px "Liberation Serif", serif; fill: #fff; }
.glyph-pc { font: 700 12px "Open Sans", sans-serif; fill: #fff; }
.glyph-talk { font: 800 9px "Open Sans", sans-serif; fill: #fae100; }
.tray { margin-left: auto; display: flex; align-items: center; gap: 20px; }
.tray > :first-child { margin-right: -8px; }
.tray time { display: flex; flex-direction: column; align-items: center; width: 94px; line-height: 29px; font-size: 18px; margin-left: -5px; white-space: nowrap; }
.tray time + svg { margin: 0 10px 0 6px; }
.tray i { align-self: stretch; width: 1px; background: #6c7788; margin-right: 6px; }
```
